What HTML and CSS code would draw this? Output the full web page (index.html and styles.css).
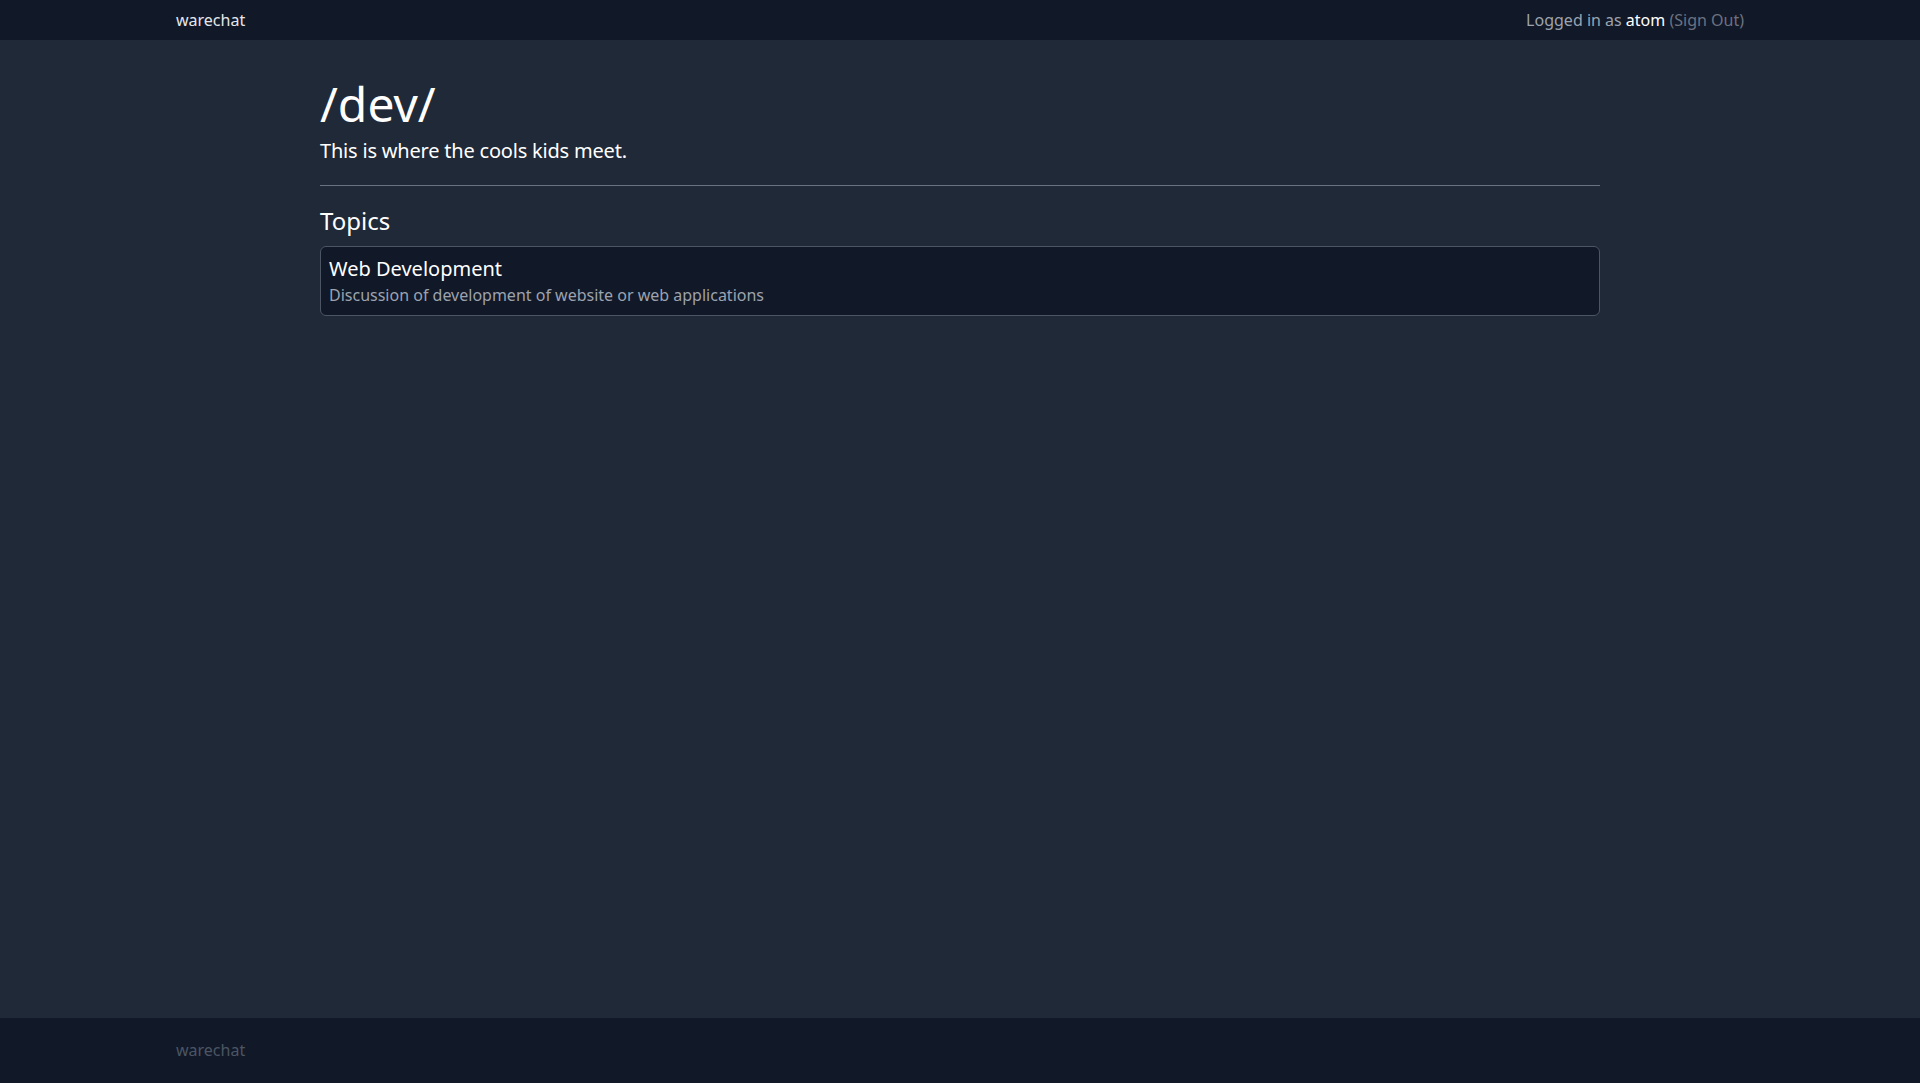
FILE: index.html
```html
<!DOCTYPE html>
<html lang="en">
<head>
    <meta charset="UTF-8">
    <meta name="viewport" content="width=device-width, initial-scale=1.0">
    <title>/dev/ - warechat</title>
    <link rel="stylesheet" href="styles.css">
</head>
<body>
    <header class="site-header">
        <div class="header-inner">
            <a class="brand" href="#">warechat</a>
            <div class="user-info">
                Logged in as <span class="username">atom</span> <a class="sign-out" href="#">(Sign Out)</a>
            </div>
        </div>
    </header>

    <main class="board">
        <h1 class="board-title">/dev/</h1>
        <p class="board-desc">This is where the cools kids meet.</p>
        <hr class="divider">
        <h2 class="section-title">Topics</h2>
        <div class="topic-list">
            <a class="topic" href="#">
                <div class="topic-name">Web Development</div>
                <div class="topic-desc">Discussion of development of website or web applications</div>
            </a>
        </div>
    </main>

    <footer class="site-footer">
        <div class="footer-inner">warechat</div>
    </footer>
</body>
</html>
```

FILE: styles.css
```css
html, body {
    height: 100%;
}
body {
    margin: 0;
    background-color: #1f2937;
    color: #ffffff;
    font-family: 'Noto Sans', 'Open Sans', sans-serif;
    font-size: 16px;
    line-height: 24px;
    display: flex;
    flex-direction: column;
    min-height: 100vh;
}
a {
    color: inherit;
    text-decoration: none;
}
.site-header {
    background-color: #111827;
    height: 40px;
}
.header-inner {
    max-width: 1600px;
    margin: 0 auto;
    padding: 0 16px;
    height: 100%;
    display: flex;
    align-items: center;
    justify-content: space-between;
    box-sizing: border-box;
}
.brand {
    color: #e5e7eb;
}
.user-info {
    color: #9ca3af;
}
.username {
    color: #ffffff;
}
.sign-out {
    color: #6b7280;
}
.board {
    flex: 1;
    width: 1280px;
    margin: 0 auto;
    padding-top: 40px;
}
.board-title {
    margin: 0 0 9px;
    font-size: 48px;
    line-height: 48px;
    font-weight: 400;
}
.board-desc {
    margin: 0;
    font-size: 20px;
    line-height: 28px;
    letter-spacing: -0.2px;
}
.divider {
    margin: 20px 0 19px;
    border: none;
    border-top: 1px solid #6b7280;
}
.section-title {
    margin: 0 0 9px;
    font-size: 24px;
    line-height: 32px;
    font-weight: 400;
}
.topic {
    display: block;
    background-color: #111827;
    border: 1px solid #4b5563;
    border-radius: 6px;
    padding: 8px;
}
.topic-name {
    font-size: 20px;
    line-height: 28px;
}
.topic-desc {
    color: #9ca3af;
}
.site-footer {
    background-color: #111827;
    height: 65px;
}
.footer-inner {
    max-width: 1600px;
    margin: 0 auto;
    padding: 20px 16px;
    box-sizing: border-box;
    color: #4b5563;
}
```
